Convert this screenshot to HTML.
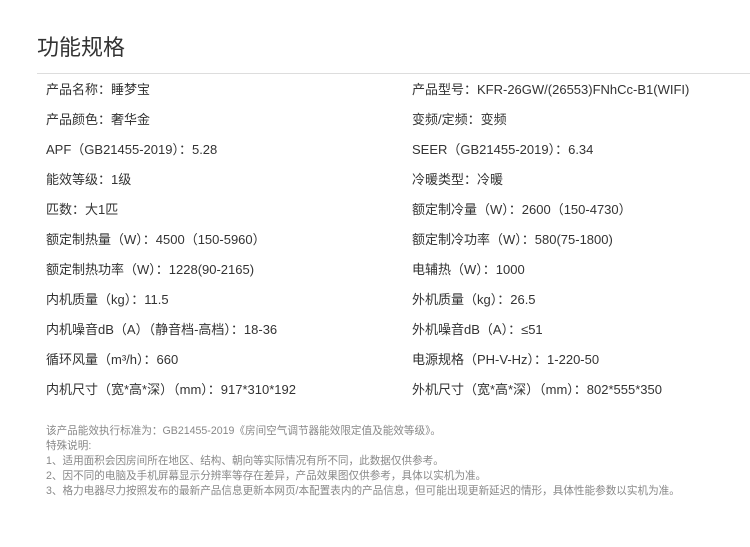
<!DOCTYPE html>
<html><head><meta charset="utf-8"><style>
body{margin:0;width:750px;height:547px;background:#fff;font-family:"Liberation Sans","Noto Sans CJK SC",sans-serif;color:#333;position:relative;overflow:hidden}
.t{position:absolute;left:37px;top:33px;font-size:22px;line-height:30px;color:#333}
.hr{position:absolute;left:37px;right:0;top:73px;height:1px;background:#ddd}
.r{position:absolute;font-size:13px;line-height:20px;white-space:nowrap}
.n{position:absolute;left:46px;top:424px;font-size:10.6px;line-height:15px;color:#888;white-space:nowrap}
</style></head><body>
<div class="t">功能规格</div>
<div class="hr"></div>
<div class="r" style="left:46px;top:80px">产品名称：睡梦宝</div>
<div class="r" style="left:412px;top:80px">产品型号：KFR-26GW/(26553)FNhCc-B1(WIFI)</div>
<div class="r" style="left:46px;top:110px">产品颜色：奢华金</div>
<div class="r" style="left:412px;top:110px">变频/定频：变频</div>
<div class="r" style="left:46px;top:140px">APF（GB21455-2019）：5.28</div>
<div class="r" style="left:412px;top:140px">SEER（GB21455-2019）：6.34</div>
<div class="r" style="left:46px;top:170px">能效等级：1级</div>
<div class="r" style="left:412px;top:170px">冷暖类型：冷暖</div>
<div class="r" style="left:46px;top:200px">匹数：大1匹</div>
<div class="r" style="left:412px;top:200px">额定制冷量（W）：2600（150-4730）</div>
<div class="r" style="left:46px;top:230px">额定制热量（W）：4500（150-5960）</div>
<div class="r" style="left:412px;top:230px">额定制冷功率（W）：580(75-1800)</div>
<div class="r" style="left:46px;top:260px">额定制热功率（W）：1228(90-2165)</div>
<div class="r" style="left:412px;top:260px">电辅热（W）：1000</div>
<div class="r" style="left:46px;top:290px">内机质量（kg）：11.5</div>
<div class="r" style="left:412px;top:290px">外机质量（kg）：26.5</div>
<div class="r" style="left:46px;top:320px">内机噪音dB（A）（静音档-高档）：18-36</div>
<div class="r" style="left:412px;top:320px">外机噪音dB（A）：≤51</div>
<div class="r" style="left:46px;top:350px">循环风量（m³/h）：660</div>
<div class="r" style="left:412px;top:350px">电源规格（PH-V-Hz）：1-220-50</div>
<div class="r" style="left:46px;top:380px">内机尺寸（宽*高*深）（mm）：917*310*192</div>
<div class="r" style="left:412px;top:380px">外机尺寸（宽*高*深）（mm）：802*555*350</div>
<div class="n">该产品能效执行标准为：GB21455-2019《房间空气调节器能效限定值及能效等级》。<br>特殊说明:<br>1、适用面积会因房间所在地区、结构、朝向等实际情况有所不同，此数据仅供参考。<br>2、因不同的电脑及手机屏幕显示分辨率等存在差异，产品效果图仅供参考，具体以实机为准。<br>3、格力电器尽力按照发布的最新产品信息更新本网页/本配置表内的产品信息，但可能出现更新延迟的情形，具体性能参数以实机为准。</div>
</body></html>
